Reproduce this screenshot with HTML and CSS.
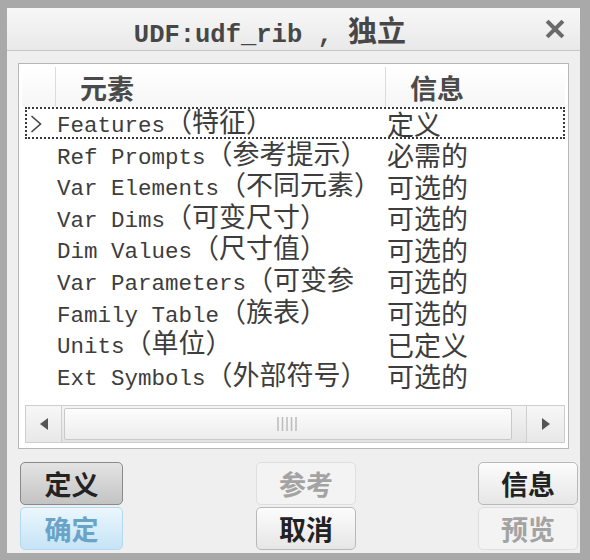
FILE: index.html
```html
<!DOCTYPE HTML>
<html>
  <head>
    <title>UDF:udf_rib</title>
    <meta charset="utf-8" />
    <link rel="stylesheet" href="styles.css">
  </head>
  <body>
    <div class="window">
      <div class="titlebar">
        <div class="title"><span class="en">UDF:udf_rib , </span><span class="zh">独立</span></div>
        <div class="close">
          <svg width="20" height="20" viewBox="0 0 20 20">
            <path d="M3.5 3.5 L16.5 16.5 M16.5 3.5 L3.5 16.5" stroke="#6a6a6a" stroke-width="4" stroke-linecap="square" fill="none" />
          </svg>
        </div>
      </div>
      <div class="content">
        <div class="listbox">
          <div class="list-head">
            <div class="hcell gutter"></div>
            <div class="hcell">元素</div>
            <div class="hcell">信息</div>
          </div>
          <div class="rows">
            <div class="row sel">
              <span class="mark">
                <svg width="12" height="20" viewBox="0 0 12 20"><polyline points="1.5,2 10.5,10 1.5,18" fill="none" stroke="#444" stroke-width="1.6" /></svg>
              </span>
              <span class="el">Features<span class="zh">（特征）</span></span>
              <span class="zh">定义</span>
            </div>
            <div class="row">
              <span></span>
              <span class="el">Ref Prompts<span class="zh">（参考提示）</span></span>
              <span class="zh">必需的</span>
            </div>
            <div class="row">
              <span></span>
              <span class="el">Var Elements<span class="zh">（不同元素）</span></span>
              <span class="zh">可选的</span>
            </div>
            <div class="row">
              <span></span>
              <span class="el">Var Dims<span class="zh">（可变尺寸）</span></span>
              <span class="zh">可选的</span>
            </div>
            <div class="row">
              <span></span>
              <span class="el">Dim Values<span class="zh">（尺寸值）</span></span>
              <span class="zh">可选的</span>
            </div>
            <div class="row">
              <span></span>
              <span class="el">Var Parameters<span class="zh">（可变参</span></span>
              <span class="zh">可选的</span>
            </div>
            <div class="row">
              <span></span>
              <span class="el">Family Table<span class="zh">（族表）</span></span>
              <span class="zh">可选的</span>
            </div>
            <div class="row">
              <span></span>
              <span class="el">Units<span class="zh">（单位）</span></span>
              <span class="zh">已定义</span>
            </div>
            <div class="row">
              <span></span>
              <span class="el">Ext Symbols<span class="zh">（外部符号）</span></span>
              <span class="zh">可选的</span>
            </div>
          </div>
          <div class="hscroll">
            <div class="sb-btn left">
              <svg width="8" height="12" viewBox="0 0 8 12"><polygon points="8,0 0,6 8,12" fill="#555" /></svg>
            </div>
            <div class="thumb">
              <svg width="22" height="14" viewBox="0 0 22 14">
                <path d="M1 0 V14 M5.5 0 V14 M10 0 V14 M14.5 0 V14 M19 0 V14" stroke="#bcbcbc" stroke-width="1.5" />
              </svg>
            </div>
            <div class="sb-track"></div>
            <div class="sb-btn right">
              <svg width="8" height="12" viewBox="0 0 8 12"><polygon points="0,0 8,6 0,12" fill="#555" /></svg>
            </div>
          </div>
        </div>
        <div class="actions">
          <div class="btn-col">
            <button class="btn pressed">定义</button>
            <button class="btn default">确定</button>
          </div>
          <div class="btn-col mid">
            <button class="btn" disabled>参考</button>
            <button class="btn">取消</button>
          </div>
          <div class="btn-col">
            <button class="btn">信息</button>
            <button class="btn" disabled>预览</button>
          </div>
        </div>
      </div>
    </div>
  </body>
</html>
```

FILE: styles.css
```css
body {
  margin: 0;
  background: #fff;
}
.window {
  width: 590px;
  height: 560px;
  box-sizing: border-box;
  border: 7px solid #a9a9a9;
  border-top-width: 8px;
  border-right-width: 10px;
  background: #efefef;
  display: flex;
  flex-direction: column;
}
.titlebar {
  height: 43px;
  box-sizing: border-box;
  border-bottom: 1px solid #c6c6c6;
  background: linear-gradient(#f7f7f7, #e9e9e9);
  display: flex;
  align-items: center;
}
.title {
  flex: 1;
  text-align: center;
  color: #474747;
  white-space: pre;
}
.title .en {
  font: bold 25.5px "Liberation Mono", monospace;
}
.title .zh {
  font: bold 29px "Noto Sans CJK SC", sans-serif;
}
.close {
  width: 44px;
  display: flex;
  justify-content: center;
  padding-right: 3px;
}
.content {
  padding: 12px 0 0 11px;
}
.listbox {
  width: 551px;
  box-sizing: border-box;
  border: 1px solid #b7b7b7;
  padding: 3px 3px 5px 3px;
  background: #fff;
}
.list-head {
  height: 40px;
  display: grid;
  grid-template-columns: 33px 330px 1fr;
  background: linear-gradient(#fff, #f6f6f6);
}
.hcell {
  border-left: 1px solid #dcdcdc;
  padding-left: 24px;
  display: flex;
  align-items: center;
  font: bold 27px "Noto Sans CJK SC", sans-serif;
  color: #4a4a4a;
}
.hcell.gutter {
  border-left: none;
}
.rows {
  height: 298px;
  margin-left: 3px;
}
.row {
  height: 31.6px;
  display: grid;
  grid-template-columns: 32px 330px 1fr;
  align-items: center;
  white-space: nowrap;
  color: #3d3d3d;
  line-height: 28px;
}
.row.sel {
  outline: 2px dotted #3a3a3a;
  outline-offset: -2px;
}
.mark {
  display: flex;
  padding-left: 5px;
}
.el {
  font: 22.5px/28px "Liberation Mono", monospace;
}
.zh {
  font: 27px/28px "Noto Sans CJK SC", sans-serif;
}
.hscroll {
  margin-left: 3px;
  height: 38px;
  box-sizing: border-box;
  border: 1px solid #cdcdcd;
  background: linear-gradient(#f4f4f4, #e3e3e3);
  display: flex;
}
.sb-btn {
  display: flex;
  align-items: center;
  justify-content: center;
  background: linear-gradient(#f7f7f7, #e8e8e8);
}
.sb-btn.left {
  width: 35px;
  border-right: 1px solid #cfcfcf;
}
.sb-btn.right {
  width: 37px;
  border-left: 1px solid #cfcfcf;
}
.thumb {
  width: 448px;
  margin: 2px 0 2px 2px;
  box-sizing: border-box;
  border: 1px solid #c9c9c9;
  border-radius: 2px;
  background: linear-gradient(#fdfdfd, #ececec);
  display: flex;
  align-items: center;
  justify-content: center;
}
.sb-track {
  flex: 1;
}
.actions {
  display: flex;
  margin-top: 13px;
  padding-left: 2px;
}
.btn-col {
  display: flex;
  flex-direction: column;
  gap: 2px;
}
.btn-col.mid {
  margin: 0 122px 0 133px;
}
.btn {
  width: 100px;
  height: 43px;
  box-sizing: border-box;
  border: 1px solid #b9b9b9;
  border-radius: 5px;
  background: linear-gradient(#fcfcfc, #e6e6e6);
  font: bold 27px "Noto Sans CJK SC", sans-serif;
  color: #222;
  padding: 0;
  display: flex;
  align-items: center;
  justify-content: center;
}
.btn.pressed,
.btn.default {
  width: 103px;
}
.btn.pressed {
  border-color: #8a8a8a;
  background: linear-gradient(#e4e4e4, #c3c3c3);
}
.btn.default {
  border-color: #b3d9f0;
  background: linear-gradient(#ebf6fd, #c5e4f6);
  color: #6aa3c8;
}
.btn:disabled {
  border-color: #dedede;
  background: #f3f3f3;
  color: #a3a3a3;
}
```
